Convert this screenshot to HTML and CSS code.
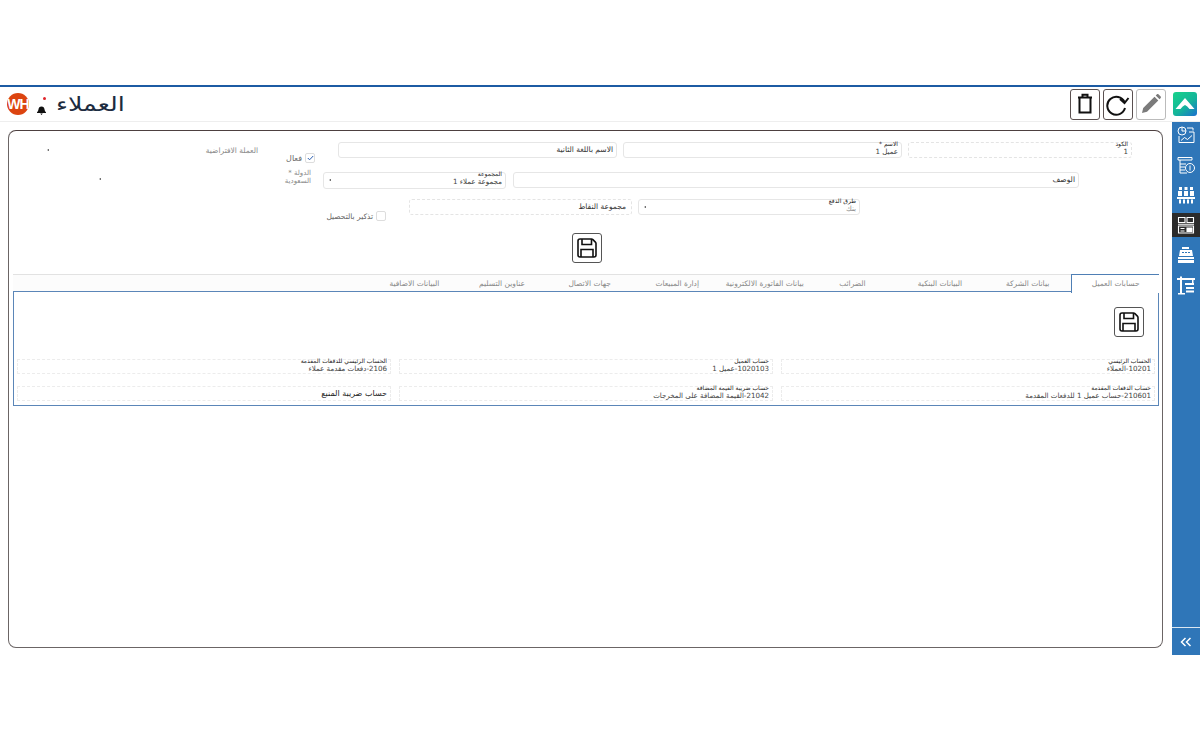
FILE: index.html
```html
<!DOCTYPE html>
<html lang="ar">
<head>
    <meta charset="utf-8">
    <title>العملاء</title>
    <link rel="stylesheet" href="styles.css">
</head>
<body>
    <header class="topbar">
        <div class="top-left">
            <div class="avatar">WH</div>
            <div class="bell">
                <svg width="9" height="9" viewBox="0 0 9 9"><path d="M4.500 .5C2.600 .5 1.700 1.800 1.500 3.300 1.300 4.800 .8 5.600 0 6.300V7h9v-.7C8.200 5.600 7.700 4.800 7.500 3.300 7.300 1.800 6.400 .5 4.500 .5zM3.200 7.500h2.600L4.500 9z" fill="#111"/></svg>
                <span class="bell-dot"></span>
            </div>
            <div class="page-title">العملاء</div>
        </div>
        <div class="top-right">
            <button class="tool-btn">
                <svg width="20" height="22" viewBox="0 0 20 22" fill="none" stroke="#111" stroke-width="2"><path d="M3 4.500h14M7.500 4V1.800h5V4M4.500 5v14.500h11V5"/></svg>
            </button>
            <button class="tool-btn">
                <svg width="26" height="24" viewBox="0 0 26 24" fill="none" stroke="#111" stroke-width="2"><path d="M20 16A9 9 0 1 1 19.500 10"/><path d="M15 7l4.500 4 4-5"/></svg>
            </button>
            <button class="tool-btn tool-btn-off">
                <svg width="22" height="22" viewBox="0 0 22 22"><path d="M2 20l1.200-5L14.500 3.700l3.800 3.800L7 18.800zM15.700 2.500l1.300-1.200c.4-.4 1-.4 1.400 0l2.300 2.300c.4.4.4 1 0 1.400l-1.200 1.300z" fill="#7b7b7b"/></svg>
            </button>
            <div class="logo">
                <svg width="24" height="24" viewBox="0 0 24 24"><path d="M2.500 17L12 6l9.500 11h-5c-1.500-1.800-2.900-3.200-4.500-4-1.600.8-3 2.200-4.500 4z" fill="#fff"/></svg>
            </div>
        </div>
    </header>

    <div class="main">
        <div class="content">
            <div class="card" dir="rtl">
                <div class="row row-one">
                    <div class="field field-code dashed">
                        <label>الكود</label>
                        <div class="value">1</div>
                    </div>
                    <div class="field field-name">
                        <label>الاسم *</label>
                        <div class="value">عميل 1</div>
                    </div>
                    <div class="field field-name plain">
                        <div class="value">الاسم باللغة الثانية</div>
                    </div>
                    <div class="check-wrap check-active">
                        <span class="check checked">
                            <svg width="7" height="6" viewBox="0 0 7 6" fill="none" stroke="#2a5db0" stroke-width="1"><path d="M.8 3l1.800 1.800L6.200 1"/></svg>
                        </span>
                        <span class="check-text check-text-big">فعال</span>
                    </div>
                    <div class="muted-label currency-label">العملة الافتراضية</div>
                    <span class="arrow currency-arrow"></span>
                </div>

                <div class="row row-two">
                    <div class="field field-desc plain">
                        <div class="value">الوصف</div>
                    </div>
                    <div class="field field-group">
                        <label>المجموعة</label>
                        <div class="value">مجموعة عملاء 1</div>
                        <span class="arrow"></span>
                    </div>
                    <div class="country">
                        <div class="muted-label">الدولة *</div>
                        <div class="muted-label">السعودية</div>
                    </div>
                    <span class="arrow country-arrow"></span>
                </div>

                <div class="row row-three">
                    <div class="field field-pay">
                        <label>طرق الدفع</label>
                        <div class="value soft">بنك</div>
                        <span class="arrow"></span>
                    </div>
                    <div class="field field-points dashed plain">
                        <div class="value">مجموعة النقاط</div>
                    </div>
                    <div class="check-wrap check-remind">
                        <span class="check"></span>
                        <span class="check-text">تذكير بالتحصيل</span>
                    </div>
                </div>

                <div class="save-row">
                    <button class="save-btn">
                        <svg width="22" height="22" viewBox="0 0 22 22" fill="none" stroke="#111" stroke-width="1.600"><path d="M4 2h11.500c.5 0 1 .2 1.400.6l2.500 2.500c.4.4.6.9.600 1.400V18a2 2 0 0 1-2 2H4a2 2 0 0 1-2-2V4a2 2 0 0 1 2-2z"/><path d="M6 2v5.500h9.500V2M5 20v-7.500h12V20"/></svg>
                    </button>
                </div>

                <div class="tabs">
                    <div class="tab tab-active">حسابات العميل</div>
                    <div class="tab">بيانات الشركة</div>
                    <div class="tab">البيانات البنكية</div>
                    <div class="tab">الضرائب</div>
                    <div class="tab">بيانات الفاتورة الالكترونية</div>
                    <div class="tab">إدارة المبيعات</div>
                    <div class="tab">جهات الاتصال</div>
                    <div class="tab">عناوين التسليم</div>
                    <div class="tab">البيانات الاضافية</div>
                </div>

                <div class="panel">
                    <button class="save-btn panel-save">
                        <svg width="22" height="22" viewBox="0 0 22 22" fill="none" stroke="#111" stroke-width="1.600"><path d="M4 2h11.500c.5 0 1 .2 1.400.6l2.500 2.500c.4.4.6.9.600 1.400V18a2 2 0 0 1-2 2H4a2 2 0 0 1-2-2V4a2 2 0 0 1 2-2z"/><path d="M6 2v5.500h9.500V2M5 20v-7.500h12V20"/></svg>
                    </button>
                    <div class="accounts">
                        <div class="account">
                            <label>الحساب الرئيسي</label>
                            <div class="value">10201-العملاء</div>
                        </div>
                        <div class="account">
                            <label>حساب العميل</label>
                            <div class="value">1020103-عميل 1</div>
                        </div>
                        <div class="account">
                            <label>الحساب الرئيسي للدفعات المقدمة</label>
                            <div class="value">2106-دفعات مقدمة عملاء</div>
                        </div>
                        <div class="account">
                            <label>حساب الدفعات المقدمة</label>
                            <div class="value">210601-حساب عميل 1 للدفعات المقدمة</div>
                        </div>
                        <div class="account">
                            <label>حساب ضريبة القيمة المضافة</label>
                            <div class="value">21042-القيمة المضافة على المخرجات</div>
                        </div>
                        <div class="account">
                            <div class="value value-only">حساب ضريبة المنبع</div>
                        </div>
                    </div>
                </div>
            </div>
        </div>

        <nav class="sidebar">
            <div class="side-items">
                <div class="side-item">
                    <svg width="20" height="20" viewBox="0 0 20 20" fill="none" stroke="#fff" stroke-width="1"><circle cx="6" cy="6" r="4"/><path d="M6 2v4h4M11 3h6v2.500M3 11v6.500h15V7h-5"/><path d="M5 15.500l3.500-3 3 2 4.500-4"/></svg>
                </div>
                <div class="side-item">
                    <svg width="20" height="20" viewBox="0 0 20 20" fill="none" stroke="#fff" stroke-width="1"><path d="M2 2.500h14v2.500H2zM4 5v13h7M4 9h6M4 12h5M4 15h5"/><circle cx="14" cy="13" r="4.500"/><path d="M14 10.500v5"/></svg>
                </div>
                <div class="side-item">
                    <svg width="20" height="20" viewBox="0 0 20 20" fill="#fff"><rect x="3" y="2" width="3" height="3"/><rect x="8.500" y="2" width="3" height="3"/><rect x="14" y="2" width="3" height="3"/><rect x="2" y="6" width="4" height="5"/><rect x="8" y="6" width="4" height="5"/><rect x="14" y="6" width="4" height="5"/><rect x="1" y="12" width="18" height="2"/><rect x="3" y="14.500" width="2" height="4"/><rect x="7" y="14.500" width="2" height="4"/><rect x="11" y="14.500" width="2" height="4"/><rect x="15" y="14.500" width="2" height="4"/></svg>
                </div>
                <div class="side-item side-item-active">
                    <svg width="20" height="20" viewBox="0 0 20 20" fill="none" stroke="#fff" stroke-width="1.100"><path d="M2.500 2.500h6.500v5H2.500zM11 2.500h6.500v5H11zM2.500 11h15v7h-15zM2 9.200h16"/><path d="M11 13h5v3.500h-5z" fill="#fff"/><path d="M4.500 13.500h4M4.500 16h4"/></svg>
                </div>
                <div class="side-item">
                    <svg width="20" height="20" viewBox="0 0 20 20" fill="#fff"><path d="M6 2h7v2H6zM4 5h12l1 6H3zM2 12h16v2H2zM2 15h16v3H2z"/><path d="M6 7h2v1H6zM9 7h2v1H9zM12 7h2v1h-2z" fill="#2f76b8"/></svg>
                </div>
                <div class="side-item">
                    <svg width="20" height="20" viewBox="0 0 20 20" fill="#fff"><path d="M1 3h18v2H1zM4 1.500h2v17H4zM2 18h7v1.500H2zM9 8h9v2H9zM10 12h8v2h-8zM10 15.500h8v2h-8zM16 5h1.500v3H16z"/></svg>
                </div>
            </div>
            <div class="side-foot">
                <svg width="12" height="10" viewBox="0 0 12 10" fill="none" stroke="#fff" stroke-width="1.500"><path d="M5.500 1L1.500 5l4 4M10.500 1l-4 4 4 4"/></svg>
            </div>
        </nav>
    </div>
</body>
</html>
```

FILE: styles.css
```css
* {
    box-sizing: border-box;
}

body {
    margin: 0;
    padding-top: 85px;
    background: #fff;
    font-family: "DejaVu Sans", sans-serif;
    color: #333;
    overflow: hidden;
}

button {
    padding: 0;
    background: #fff;
    cursor: pointer;
}

/* top bar */
.topbar {
    display: flex;
    justify-content: space-between;
    align-items: center;
    height: 37px;
    border-top: 2px solid #1c5ba3;
    border-bottom: 1px solid #eee;
    padding: 0 3px 0 7px;
}

.top-left {
    display: flex;
    align-items: center;
}

.avatar {
    width: 22px;
    height: 22px;
    border-radius: 50%;
    background: #dc4410;
    color: #fff;
    font-family: "Liberation Sans", sans-serif;
    font-size: 14px;
    font-weight: bold;
    line-height: 22px;
    text-align: center;
    letter-spacing: -1px;
    overflow: hidden;
}

.bell {
    position: relative;
    width: 10px;
    height: 9px;
    margin-left: 8px;
    margin-right: 9px;
}

.bell-dot {
    position: absolute;
    top: -3px;
    left: 6px;
    width: 3px;
    height: 3px;
    border-radius: 50%;
    background: #e0242a;
}

/* the reference face is much wider than DejaVu */
.page-title {
    font-size: 20px;
    line-height: 30px;
    color: #1c2b40;
    transform: scaleX(1.27);
    transform-origin: left center;
}

.top-right {
    display: flex;
    align-items: center;
    gap: 3px;
}

.tool-btn {
    display: flex;
    align-items: center;
    justify-content: center;
    width: 30px;
    height: 31px;
    border: 1px solid #5a5050;
    border-radius: 3px;
}

.tool-btn-off {
    border-color: #bbb;
}

.logo {
    display: flex;
    align-items: center;
    justify-content: center;
    width: 24px;
    height: 24px;
    margin-left: 4px;
    border-radius: 3px;
    background: linear-gradient(140deg, #18d28a 0%, #14b59a 55%, #1b6fd0 100%);
}

/* page body */
.main {
    display: flex;
    height: 533px;
}

.content {
    flex: 1;
    min-width: 0;
    padding: 8px 9px 0 8px;
}

.sidebar {
    display: flex;
    flex-direction: column;
    justify-content: space-between;
    flex-shrink: 0;
    width: 28px;
    background: #2f76b8;
}

.side-items {
    display: flex;
    flex-direction: column;
    gap: 6px;
    padding-top: 1px;
}

.side-item {
    display: flex;
    align-items: center;
    justify-content: center;
    height: 24px;
}

.side-item-active {
    background: #2b2b2b;
}

.side-foot {
    display: flex;
    align-items: center;
    justify-content: center;
    height: 28px;
    border-top: 1px solid #dbe7f2;
}

.card {
    height: 518px;
    padding: 11px 3px 0 4px;
    border: 1px solid #6b6565;
    border-top-color: #4d4040;
    border-radius: 8px;
}

/* form rows */
.row {
    position: relative;
    display: flex;
    align-items: flex-start;
}

.row-one {
    height: 30px;
    padding-right: 27px;
    gap: 6px;
}

.row-two {
    height: 27px;
    padding-right: 80px;
    gap: 7px;
}

.row-three {
    height: 34px;
    padding-right: 299px;
    gap: 6px;
}

.field {
    position: relative;
    height: 16px;
    padding: 0 3px;
    border: 1px solid #e6e6e6;
    border-radius: 3px;
    background: #fff;
}

.dashed {
    border: 1px dashed #e4e4e4;
}

.field label,
.account label {
    display: block;
    margin-top: -3px;
    font-size: 6px;
    line-height: 7px;
    color: #222;
}

.value {
    font-size: 7.100px;
    line-height: 9px;
    color: #444;
}

.plain .value {
    font-size: 7.500px;
    line-height: 14px;
    color: #333;
}

.soft {
    color: #888;
}

.field-code {
    width: 224px;
}

.field-name {
    width: 279px;
}

.field-desc {
    width: 566px;
}

.field-group {
    width: 183px;
    height: 17px;
}

.field-pay {
    width: 222px;
}

.field-points {
    width: 223px;
    padding-right: 5px;
}

.arrow {
    display: block;
    width: 0;
    height: 0;
    border-top: 1.500px solid transparent;
    border-bottom: 1.500px solid transparent;
    border-right: 2px solid #444;
}

.field .arrow {
    position: absolute;
    top: 6px;
    left: 5px;
}

.check-wrap {
    display: flex;
    align-items: center;
    gap: 3px;
}

.check {
    display: flex;
    align-items: center;
    justify-content: center;
    width: 10px;
    height: 10px;
    border: 1px solid #ddd;
    border-radius: 2px;
}

.check-text {
    font-size: 7.500px;
    color: #666;
}

.check-text-big {
    font-size: 8px;
}

.check-active {
    margin-top: 11px;
    margin-right: 17px;
}

.check-remind {
    margin-top: 12px;
    margin-right: 17px;
}

.muted-label {
    font-size: 7px;
    line-height: 8px;
    color: #888;
}

.currency-label {
    margin-top: 5px;
    margin-right: 22px;
    font-size: 7.500px;
}

.currency-arrow {
    margin-top: 7px;
    margin-right: 151px;
}

.country {
    margin-top: -3px;
    margin-right: 4px;
    width: 28px;
    padding-right: 1px;
}

.country-arrow {
    margin-top: 6px;
    margin-right: 176px;
}

.save-row {
    display: flex;
    justify-content: center;
    height: 41px;
    padding-left: 1px;
}

.save-btn {
    display: flex;
    align-items: center;
    justify-content: center;
    width: 30px;
    height: 30px;
    border: 1px solid #555;
    border-radius: 3px;
}

/* tabs */
.tabs {
    display: flex;
    height: 18px;
    border-top: 1px solid #e2e2e2;
    background: #fcfcfc;
}

.tab {
    width: 87.600px;
    padding: 3px 0 0;
    font-size: 7.500px;
    line-height: 12px;
    color: #888;
    text-align: center;
    white-space: nowrap;
}

.tab-active {
    border-top: 1px solid #4f7fb5;
    border-left: 1px solid #4f7fb5;
    margin-top: -1px;
    position: relative;
    z-index: 1;
    height: 19px;
    background: #fff;
}

.panel {
    height: 115px;
    margin-top: -1px;
    padding: 15px 14px 0 3px;
    border: 1px solid #5b86b8;
}

.panel-save {
    margin-bottom: 22px;
}

.accounts {
    display: grid;
    grid-template-columns: repeat(3, 374px);
    row-gap: 12px;
    column-gap: 8px;
    margin-right: -11px;
}

.account {
    height: 15px;
    padding: 0 3px;
    border: 1px dashed #ececec;
}

.value-only {
    font-size: 8px;
    line-height: 13px;
    color: #222;
}
```
